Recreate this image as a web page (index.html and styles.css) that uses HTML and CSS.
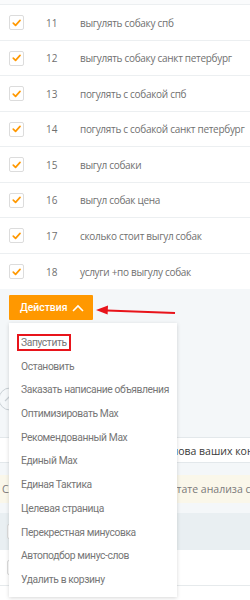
FILE: index.html
```html
<!DOCTYPE html>
<html lang="ru">
<head>
<meta charset="utf-8">
<link rel="stylesheet" href="styles.css">
</head>
<body>
<div class="page">
  <div class="top-strip"></div>
  <div class="rows">
    <div class="row"><span class="cb"><svg viewBox="0 0 14 14"><path d="M3.5 7.2 L6 9.6 L10.8 4.2"/></svg></span><span class="num">11</span><span class="kw">выгулять собаку спб</span></div>
    <div class="row"><span class="cb"><svg viewBox="0 0 14 14"><path d="M3.5 7.2 L6 9.6 L10.8 4.2"/></svg></span><span class="num">12</span><span class="kw">выгулять собаку санкт петербург</span></div>
    <div class="row"><span class="cb"><svg viewBox="0 0 14 14"><path d="M3.5 7.2 L6 9.6 L10.8 4.2"/></svg></span><span class="num">13</span><span class="kw">погулять с собакой спб</span></div>
    <div class="row"><span class="cb"><svg viewBox="0 0 14 14"><path d="M3.5 7.2 L6 9.6 L10.8 4.2"/></svg></span><span class="num">14</span><span class="kw">погулять с собакой санкт петербург</span></div>
    <div class="row"><span class="cb"><svg viewBox="0 0 14 14"><path d="M3.5 7.2 L6 9.6 L10.8 4.2"/></svg></span><span class="num">15</span><span class="kw">выгул собаки</span></div>
    <div class="row"><span class="cb"><svg viewBox="0 0 14 14"><path d="M3.5 7.2 L6 9.6 L10.8 4.2"/></svg></span><span class="num">16</span><span class="kw">выгул собак цена</span></div>
    <div class="row"><span class="cb"><svg viewBox="0 0 14 14"><path d="M3.5 7.2 L6 9.6 L10.8 4.2"/></svg></span><span class="num">17</span><span class="kw">сколько стоит выгул собак</span></div>
    <div class="row"><span class="cb"><svg viewBox="0 0 14 14"><path d="M3.5 7.2 L6 9.6 L10.8 4.2"/></svg></span><span class="num">18</span><span class="kw">услуги +по выгулу собак</span></div>
  </div>

  <div class="actions-area">
    <div class="actions">
      <button class="btn">Действия <svg class="chev" viewBox="0 0 12 8"><path d="M1 7 L6 2 L11 7"/></svg></button>
      <svg class="arrow" viewBox="0 0 82 16" width="82" height="16"><path class="arrow-line" d="M12 8.4 L80 11"/><polygon class="arrow-head" points="1,8 13,3.6 12.6,12.4"/></svg>
      <div class="menu">
        <div class="item"><span class="hl">Запустить</span></div>
        <div class="item">Остановить</div>
        <div class="item">Заказать написание объявления</div>
        <div class="item">Оптимизировать Max</div>
        <div class="item">Рекомендованный Max</div>
        <div class="item">Единый Max</div>
        <div class="item">Единая Тактика</div>
        <div class="item">Целевая страница</div>
        <div class="item">Перекрестная минусовка</div>
        <div class="item">Автоподбор минус-слов</div>
        <div class="item">Удалить в корзину</div>
      </div>
    </div>
    <div class="collapse"><svg viewBox="0 0 24 24"><circle cx="12" cy="12" r="11"/><path d="M7 14 L12 9 L17 14"/></svg></div>
  </div>

  <div class="section-title">Ключевые слова ваших конкурентов</div>
  <div class="gap"></div>
  <div class="notice">Слова, которые найдены в результате анализа страниц</div>
  <div class="gap small"></div>
  <div class="thead"><span class="cb empty"></span></div>
  <div class="trow"><span class="cb empty"></span></div>
  <div class="trow last"></div>
</div>
</body>
</html>
```
FILE: styles.css
```css
* { box-sizing: border-box; }
html, body { margin: 0; padding: 0; background: #ffffff; }
body {
  width: 250px;
  height: 600px;
  overflow: hidden;
  font-family: "Open Sans", "Noto Sans", sans-serif;
  color: #6f6f6f;
}
.page { width: 250px; }

.top-strip { height: 5px; background: #fafbfc; border-bottom: 1px solid #eceff1; }

.row {
  display: flex;
  align-items: center;
  height: 36px;
  border-bottom: 1px solid #eceff1;
  font-size: 10px;
}
.row:nth-child(even) { height: 35px; }
.row:last-child { border-bottom: none; height: 35px; }

.cb {
  width: 15px;
  height: 15px;
  margin-left: 9px;
  border: 1px solid #dcdcdc;
  border-radius: 2px;
  background: #fff;
  display: flex;
  align-items: center;
  justify-content: center;
  flex: none;
}
.cb svg { width: 14px; height: 14px; }
.cb path { fill: none; stroke: #ff9800; stroke-width: 1.8; stroke-linecap: round; stroke-linejoin: round; }
.num { flex: none; width: 34px; margin-left: 22px; color: #707070; }
.kw { flex: none; color: #707070; white-space: nowrap; letter-spacing: -0.3px; }

.actions-area {
  position: relative;
  height: 148px;
  background: #f4f7f9;
  padding: 6px 0 0 9px;
}
.actions { position: relative; width: 84px; }
.btn {
  display: flex;
  align-items: center;
  width: 84px;
  height: 25px;
  border: none;
  border-radius: 1px;
  background: #ff9800;
  color: #fff;
  font-family: Roboto, "Open Sans", sans-serif;
  font-size: 10.4px;
  font-weight: 500;
  padding: 0 0 0 11px;
  margin: 0;
}
.chev { width: 12px; height: 8px; margin-left: 5px; }
.chev path { fill: none; stroke: #fff; stroke-width: 1.6; }

.arrow { position: absolute; left: 86px; top: 7px; }
.arrow-line { stroke: #e8141b; stroke-width: 2; fill: none; }
.arrow-head { fill: #e8141b; }

.menu {
  position: absolute;
  left: 0;
  top: 28px;
  width: 168px;
  height: 274px;
  background: #fff;
  box-shadow: 0 1px 4px rgba(0,0,0,0.16);
  padding-top: 8px;
  z-index: 5;
}
.item {
  height: 23.7px;
  line-height: 23.7px;
  padding-left: 12px;
  font-family: Roboto, "Open Sans", sans-serif;
  font-size: 10.3px;
  letter-spacing: -0.4px;
  color: #767676;
  white-space: nowrap;
}
.hl {
  display: inline-block;
  line-height: 13px;
  border: 2px solid #e8141b;
  padding: 0 2px;
  margin-left: -4px;
}

.collapse { position: absolute; left: -2px; top: 98px; width: 24px; height: 24px; }
.collapse svg { width: 24px; height: 24px; }
.collapse circle { fill: none; stroke: #c9d0d5; stroke-width: 1; }
.collapse path { fill: none; stroke: #c9d0d5; stroke-width: 1.2; }

.section-title {
  height: 26px;
  line-height: 26px;
  background: #fff;
  border-top: 1px solid #e3e8eb;
  border-bottom: 1px solid #e3e8eb;
  font-size: 10.5px;
  color: #3a3a3a;
  padding-left: 111px;
  white-space: nowrap;
  overflow: hidden;
}
.gap { height: 12px; background: #f4f7f9; }
.gap.small { height: 10px; }
.notice {
  height: 28px;
  line-height: 28px;
  background: #faf7ea;
  font-size: 10.5px;
  color: #7a7a7a;
  padding-left: 2px;
  white-space: nowrap;
  overflow: hidden;
}
.thead {
  height: 37px;
  background: #e9eff2;
  display: flex;
  align-items: center;
}
.trow {
  height: 36px;
  background: #fff;
  border-bottom: 1px solid #e6eaec;
  display: flex;
  align-items: center;
}
.trow.last { height: 20px; border-bottom: none; }
.cb.empty { margin-left: 7px; }
```
